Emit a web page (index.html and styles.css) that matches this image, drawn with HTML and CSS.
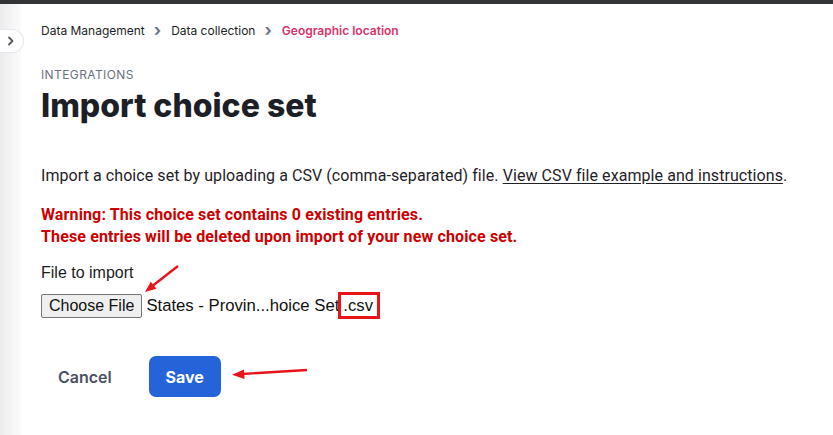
FILE: index.html
```html
<!DOCTYPE html>
<html lang="en">
<head>
    <meta charset="UTF-8" />
    <title>Import choice set</title>
    <link rel="stylesheet" href="styles.css">
</head>
<body>
<div class="topbar"></div>
<div class="layout">
    <aside class="rail">
        <button class="rail-toggle" aria-label="Expand">
            <svg width="10" height="10" viewBox="0 0 10 10"><path d="M3 1.5 L6.5 5 L3 8.5" fill="none" stroke="#555b66" stroke-width="1.8" stroke-linecap="round" stroke-linejoin="round"/></svg>
        </button>
    </aside>
    <main class="page">
        <nav class="crumbs">
            <a href="#">Data Management</a>
            <span class="sep">&rsaquo;</span>
            <a href="#">Data collection</a>
            <span class="sep">&rsaquo;</span>
            <span class="current">Geographic location</span>
        </nav>

        <div class="eyebrow">INTEGRATIONS</div>
        <h1>Import choice set</h1>

        <p class="intro">Import a choice set by uploading a CSV (comma-separated) file. <a href="#">View CSV file example and instructions</a>.</p>

        <p class="warning">Warning: This choice set contains 0 existing entries.<br>These entries will be deleted upon import of your new choice set.</p>

        <div class="field">
            <label class="field-label">File to import</label>
            <div class="file-row">
                <button class="choose">Choose File</button>
                <span class="file-name">States - Provin...hoice Set<span class="marked">.csv</span></span>
            </div>
        </div>

        <div class="actions">
            <button class="btn-cancel">Cancel</button>
            <button class="btn-save">Save</button>
        </div>

        <!-- annotation arrows -->
        <svg class="note note-file" width="42" height="32" viewBox="0 0 42 32">
            <line x1="37" y1="2" x2="12" y2="21.5" stroke="#e8141a" stroke-width="2.4"/>
            <path d="M4 28 L9.8 17.7 L15.4 24.7 Z" fill="#e8141a"/>
        </svg>
        <svg class="note note-save" width="80" height="16" viewBox="0 0 80 16">
            <line x1="77" y1="4" x2="12" y2="8" stroke="#e8141a" stroke-width="2.4"/>
            <path d="M2 8.7 L14 3.5 L14.6 13 Z" fill="#e8141a"/>
        </svg>
    </main>
</div>
</body>
</html>
```

FILE: styles.css
```css
:root {
    --ink: #1c1f26;
    --muted: #6b7280;
    --accent: #d6336c;
    --danger: #cc0000;
    --primary: #2563d8;
}
* { margin: 0; padding: 0; box-sizing: border-box; }
body {
    font-family: 'Inter', sans-serif;
    color: var(--ink);
    background: #fff;
    width: 833px;
    height: 435px;
    overflow: hidden;
}
.topbar {
    height: 4px;
    background: #333436;
}
.layout {
    display: flex;
    height: 431px;
}
.rail {
    width: 21px;
    flex: none;
    background: linear-gradient(90deg, #ececee 0%, #fbfbfb 100%);
    position: relative;
}
.rail-toggle {
    position: absolute;
    top: 25px;
    left: 0;
    width: 24px;
    height: 24px;
    border: 1px solid #e6e8ee;
    border-left: none;
    border-radius: 0 12px 12px 0;
    background: #fff;
    display: flex;
    align-items: center;
    justify-content: center;
    padding-right: 2px;
}
.page {
    position: relative;
    flex: 1;
    padding: 19px 0 0 20px;
}
.crumbs {
    display: flex;
    align-items: center;
    font-size: 12px;
    line-height: 16px;
    height: 16px;
}
.crumbs a {
    color: var(--ink);
    text-decoration: none;
}
.crumbs .sep {
    color: #6b7280;
    font-size: 17px;
    font-weight: 700;
    margin: -2px 10px 0 9px;
}
.crumbs .current {
    color: var(--accent);
    font-weight: 600;
}
.eyebrow {
    margin-top: 29px;
    font-size: 12px;
    line-height: 14px;
    letter-spacing: 0.4px;
    color: var(--muted);
}
h1 {
    font-size: 32px;
    line-height: 38px;
    font-weight: 800;
    letter-spacing: 0;
    margin-top: 5px;
}
.intro {
    font-family: 'Roboto', sans-serif;
    font-size: 16px;
    line-height: 20px;
    letter-spacing: 0.07px;
    margin-top: 41px;
    color: #1f2228;
}
.intro a {
    color: #1f2228;
    text-decoration: underline;
    text-underline-offset: 2px;
}
.warning {
    font-family: 'Roboto', sans-serif;
    font-weight: 700;
    font-size: 16px;
    line-height: 22px;
    letter-spacing: 0.13px;
    color: var(--danger);
    margin-top: 18px;
}
.field {
    margin-top: 16px;
}
.field-label {
    display: block;
    font-family: 'Liberation Sans', Arial, sans-serif;
    font-size: 16px;
    line-height: 18px;
    color: #1c1c1c;
}
.file-row {
    display: flex;
    align-items: center;
    margin-top: 12px;
    font-family: 'Liberation Sans', Arial, sans-serif;
}
.choose {
    font-family: inherit;
    font-size: 16px;
    color: #111;
    background: #efefef;
    border: 1px solid #767676;
    border-radius: 2px;
    padding: 2px 7px;
    height: 24px;
}
.file-name {
    margin-left: 4px;
    font-size: 16.7px;
    color: #111;
}
.marked {
    border: 3px solid #e8141a;
    padding: 1px 4px 1px 2px;
    margin-left: -1px;
}
.actions {
    display: flex;
    align-items: center;
    gap: 37px;
    margin-top: 38px;
}
.btn-cancel {
    font-family: 'Inter', sans-serif;
    font-size: 16px;
    font-weight: 600;
    color: #4a5160;
    background: none;
    border: none;
    padding: 0 0 0 17px;
}
.btn-save {
    font-family: 'Inter', sans-serif;
    font-size: 16px;
    font-weight: 700;
    color: #fff;
    background: var(--primary);
    border: none;
    border-radius: 7px;
    width: 72px;
    height: 41px;
}
.note {
    position: absolute;
}
.note-file {
    left: 120px;
    top: 260px;
}
.note-save {
    left: 209px;
    top: 362px;
}
```
